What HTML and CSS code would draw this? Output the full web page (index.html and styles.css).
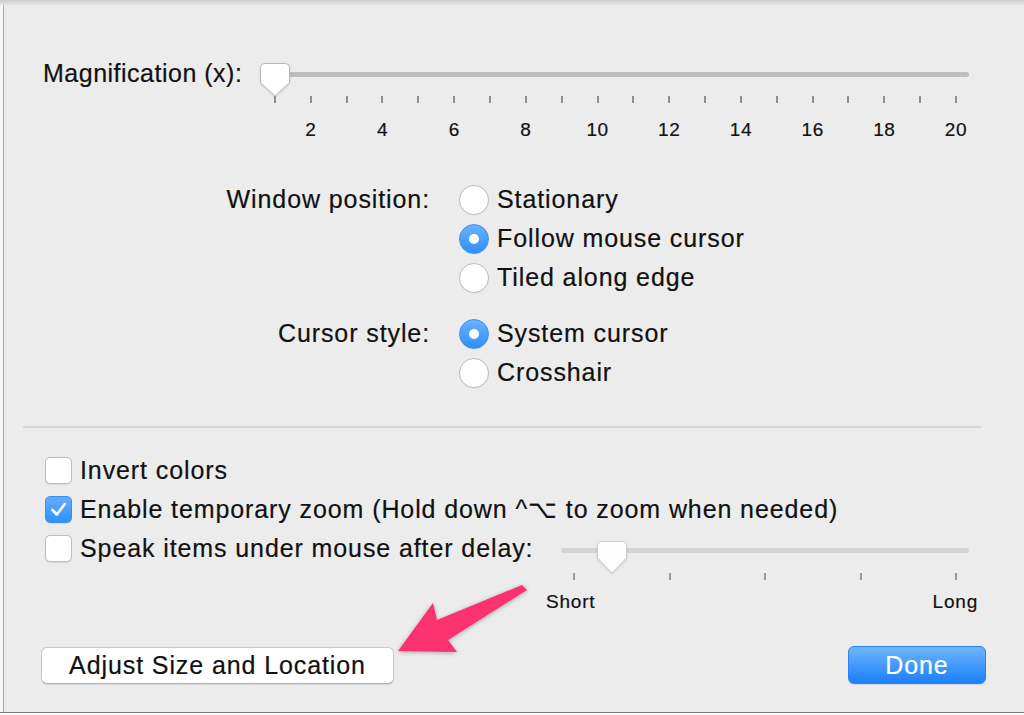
FILE: index.html
```html
<!DOCTYPE html>
<html>
<head>
<meta charset="utf-8">
<link rel="stylesheet" href="styles.css">
</head>
<body>
<div class="screen">
  <div class="topbar"></div>
  <div class="frame">
    <div class="edge"></div>
    <div class="content">
      <div class="mag-row">
        <div class="mag-label">Magnification (x):</div>
        <div class="mag-slider">
          <div class="track-area">
            <div class="track"></div>
            <svg class="thumb" width="30" height="34" viewBox="0 0 30 34"><path d="M4.5 0.5 H25.5 Q29.5 0.5 29.5 4.5 V19.5 L15 33 L0.5 19.5 V4.5 Q0.5 0.5 4.5 0.5 Z" fill="#fff" stroke="#b9b9b9" stroke-width="1"/></svg>
          </div>
          <div class="tick-grid">
            <i></i><i></i><i></i><i></i><i></i><i></i><i></i><i></i><i></i><i></i>
            <i></i><i></i><i></i><i></i><i></i><i></i><i></i><i></i><i></i><i></i>
          </div>
          <div class="tick-labels">
            <span>2</span><span>4</span><span>6</span><span>8</span><span>10</span>
            <span>12</span><span>14</span><span>16</span><span>18</span><span>20</span>
          </div>
        </div>
      </div>

      <div class="radio-group first">
        <div class="group-label">Window position:</div>
        <div class="options">
          <div class="option"><span class="radio"></span><span>Stationary</span></div>
          <div class="option"><span class="radio on"></span><span>Follow mouse cursor</span></div>
          <div class="option"><span class="radio"></span><span>Tiled along edge</span></div>
        </div>
      </div>
      <div class="radio-group second">
        <div class="group-label">Cursor style:</div>
        <div class="options">
          <div class="option"><span class="radio on"></span><span>System cursor</span></div>
          <div class="option"><span class="radio"></span><span>Crosshair</span></div>
        </div>
      </div>

      <div class="separator"></div>

      <div class="checks">
        <div class="check-row">
          <div class="check-item"><span class="box"></span><span>Invert colors</span></div>
        </div>
        <div class="check-row">
          <div class="check-item"><span class="box on"><svg width="27" height="27" viewBox="0 0 27 27"><path d="M7.5 14 L11.8 18.5 L19.8 8" fill="none" stroke="#fff" stroke-width="2.6" stroke-linecap="round" stroke-linejoin="round"/></svg></span><span>Enable temporary zoom (Hold down ^⌥ to zoom when needed)</span></div>
        </div>
        <div class="check-row speak">
          <div class="check-item speak-item"><span class="box"></span><span>Speak items under mouse after delay:</span></div>
          <div class="speak-slider">
            <div class="track-area">
              <div class="track"></div>
              <svg class="thumb" width="30" height="33" viewBox="0 0 30 33"><path d="M4.5 0.5 H25.5 Q29.5 0.5 29.5 4.5 V17 L15 32 L0.5 17 V4.5 Q0.5 0.5 4.5 0.5 Z" fill="#fcfcfc" stroke="#cdcdcd" stroke-width="1"/></svg>
            </div>
            <div class="speak-ticks"><i></i><i></i><i></i><i></i><i></i></div>
            <div class="speak-labels"><span>Short</span><span>Long</span></div>
          </div>
        </div>
      </div>

      <div class="buttons">
        <button class="btn">Adjust Size and Location</button>
        <button class="btn primary">Done</button>
      </div>
    </div>
  </div>
  <div class="bottombar"></div>

  <svg class="arrow" width="150" height="85" viewBox="0 0 150 85"><polygon points="8,71 43,23 47,40 132,5 137,10 58,60 67,72" fill="#fc3270"/></svg>
</div>
</body>
</html>
```
FILE: styles.css
```css
html, body {
  margin: 0;
  padding: 0;
}

body {
  font-family: "Liberation Sans", Arial, sans-serif;
  color: #111;
  -webkit-text-stroke: 0.2px #111;
}

.screen {
  position: relative;
  width: 1024px;
  height: 715px;
  display: flex;
  flex-direction: column;
  overflow: hidden;
  background: #ececec;
}

.topbar {
  height: 5px;
  background: linear-gradient(#cdcdcd, #e4e4e4);
}

.frame {
  flex: 1;
  display: flex;
  min-height: 0;
}

.edge {
  width: 3px;
  background: #f6f6f6;
  border-right: 1px solid #a8a8a8;
}

.content {
  flex: 1;
  display: flex;
  flex-direction: column;
  padding: 54px 0 28px 0;
  font-size: 25px;
  letter-spacing: 0.9px;
}

/* Magnification */
.mag-row {
  display: flex;
  align-items: flex-start;
  padding-left: 39px;
}

.mag-label {
  width: 214px;
  line-height: 28px;
  white-space: nowrap;
  letter-spacing: 0.5px;
}

.mag-slider {
  width: 720px;
}

.track-area {
  position: relative;
}

.mag-slider .track-area {
  height: 37px;
}

.mag-slider .track {
  position: relative;
  top: 13px;
  margin-left: 6px;
  width: 706px;
  height: 5px;
  border-radius: 3px;
  background: #bdbdbd;
}

.thumb {
  position: absolute;
  filter: drop-shadow(0 1px 1px rgba(0, 0, 0, 0.12));
}

.mag-slider .thumb {
  left: 3px;
  top: 4px;
}

.tick-grid {
  display: grid;
  grid-template-columns: repeat(20, 35.85px);
  height: 7px;
}

.tick-grid i {
  justify-self: center;
  width: 2px;
  height: 7px;
  background: #8f8f8f;
}

.tick-labels {
  display: grid;
  grid-template-columns: repeat(10, 71.7px);
  margin-left: 18px;
  margin-top: 17px;
  font-size: 19px;
  line-height: 20px;
  letter-spacing: 0.6px;
}

.tick-labels span {
  text-align: center;
}

/* Radios */
.radio-group {
  display: grid;
  grid-template-columns: 426px 1fr;
  column-gap: 29px;
}

.radio-group.first {
  margin-top: 40px;
}

.radio-group.second {
  margin-top: 17px;
}

.group-label {
  text-align: right;
  line-height: 39px;
  white-space: nowrap;
}

.option {
  display: flex;
  align-items: center;
  gap: 8px;
  height: 39px;
  white-space: nowrap;
}

.radio {
  box-sizing: border-box;
  width: 30px;
  height: 30px;
  border-radius: 50%;
  background: #fff;
  border: 1px solid #bdbdbd;
  box-shadow: 0 0.5px 1px rgba(0, 0, 0, 0.08);
  flex: none;
  position: relative;
}

.radio.on {
  border: 1px solid #3a8ff7;
  background: linear-gradient(#6ab2fd, #2f90fb);
}

.radio.on::after {
  content: "";
  position: absolute;
  left: 9px;
  top: 9px;
  width: 10px;
  height: 10px;
  border-radius: 50%;
  background: #fff;
}

.separator {
  margin: 34px 0 0 19px;
  width: 958px;
  height: 2px;
  background: #d7d7d7;
}

/* Checkboxes */
.checks {
  margin-top: 23px;
  padding-left: 41px;
}

.check-row {
  display: flex;
  align-items: flex-start;
}

.check-item {
  display: flex;
  align-items: center;
  gap: 8px;
  height: 39px;
  white-space: nowrap;
}

.speak-item {
  flex: none;
  width: 501px;
}

.box {
  box-sizing: border-box;
  width: 27px;
  height: 27px;
  border-radius: 5px;
  background: #fff;
  border: 1px solid #bdbdbd;
  box-shadow: 0 0.5px 1px rgba(0, 0, 0, 0.08);
  flex: none;
}

.box.on {
  border-color: #3a8ff7;
  background: linear-gradient(#63aefd, #3092fb);
}

.box svg {
  display: block;
  margin: -1px;
}

/* Speak slider */
.speak-slider {
  margin-top: 12px;
  width: 432px;
}

.speak-slider .track-area {
  height: 32px;
}

.speak-slider .track {
  position: relative;
  top: 7px;
  margin-left: 15px;
  width: 408px;
  height: 5px;
  border-radius: 3px;
  background: #d4d4d4;
}

.speak-slider .thumb {
  left: 51px;
  top: 0;
}

.speak-ticks {
  display: flex;
  justify-content: space-between;
  margin-left: 27px;
  width: 384px;
  height: 7px;
}

.speak-ticks i {
  width: 2px;
  height: 7px;
  background: #9a9a9a;
}

.speak-labels {
  display: flex;
  justify-content: space-between;
  margin-top: 12px;
  font-size: 19px;
  line-height: 20px;
  letter-spacing: 0.8px;
}

/* Buttons */
.buttons {
  margin-top: auto;
  display: flex;
  justify-content: space-between;
  align-items: flex-end;
  padding: 0 38px 0 37px;
}

.btn {
  font-family: inherit;
  font-size: 25px;
  letter-spacing: 0.9px;
  color: #111;
  -webkit-text-stroke: 0.2px #111;
  box-sizing: border-box;
  width: 353px;
  height: 37px;
  padding: 0;
  border-radius: 6px;
  background: #fff;
  border: 1px solid #c9c9c9;
  border-bottom-color: #b3b3b3;
  box-shadow: 0 0.5px 1px rgba(0, 0, 0, 0.1);
}

.btn.primary {
  width: 138px;
  height: 38px;
  color: #fff;
  -webkit-text-stroke: 0.2px #fff;
  border: 1px solid #2a83f3;
  background: linear-gradient(#6fb5fd, #1a80fb);
}

.bottombar {
  height: 2px;
  border-top: 1px solid #7f7f7f;
  background: #fff;
}

.arrow {
  position: absolute;
  left: 390px;
  top: 580px;
  filter: drop-shadow(0 1px 2px rgba(0, 0, 0, 0.3));
}
```
